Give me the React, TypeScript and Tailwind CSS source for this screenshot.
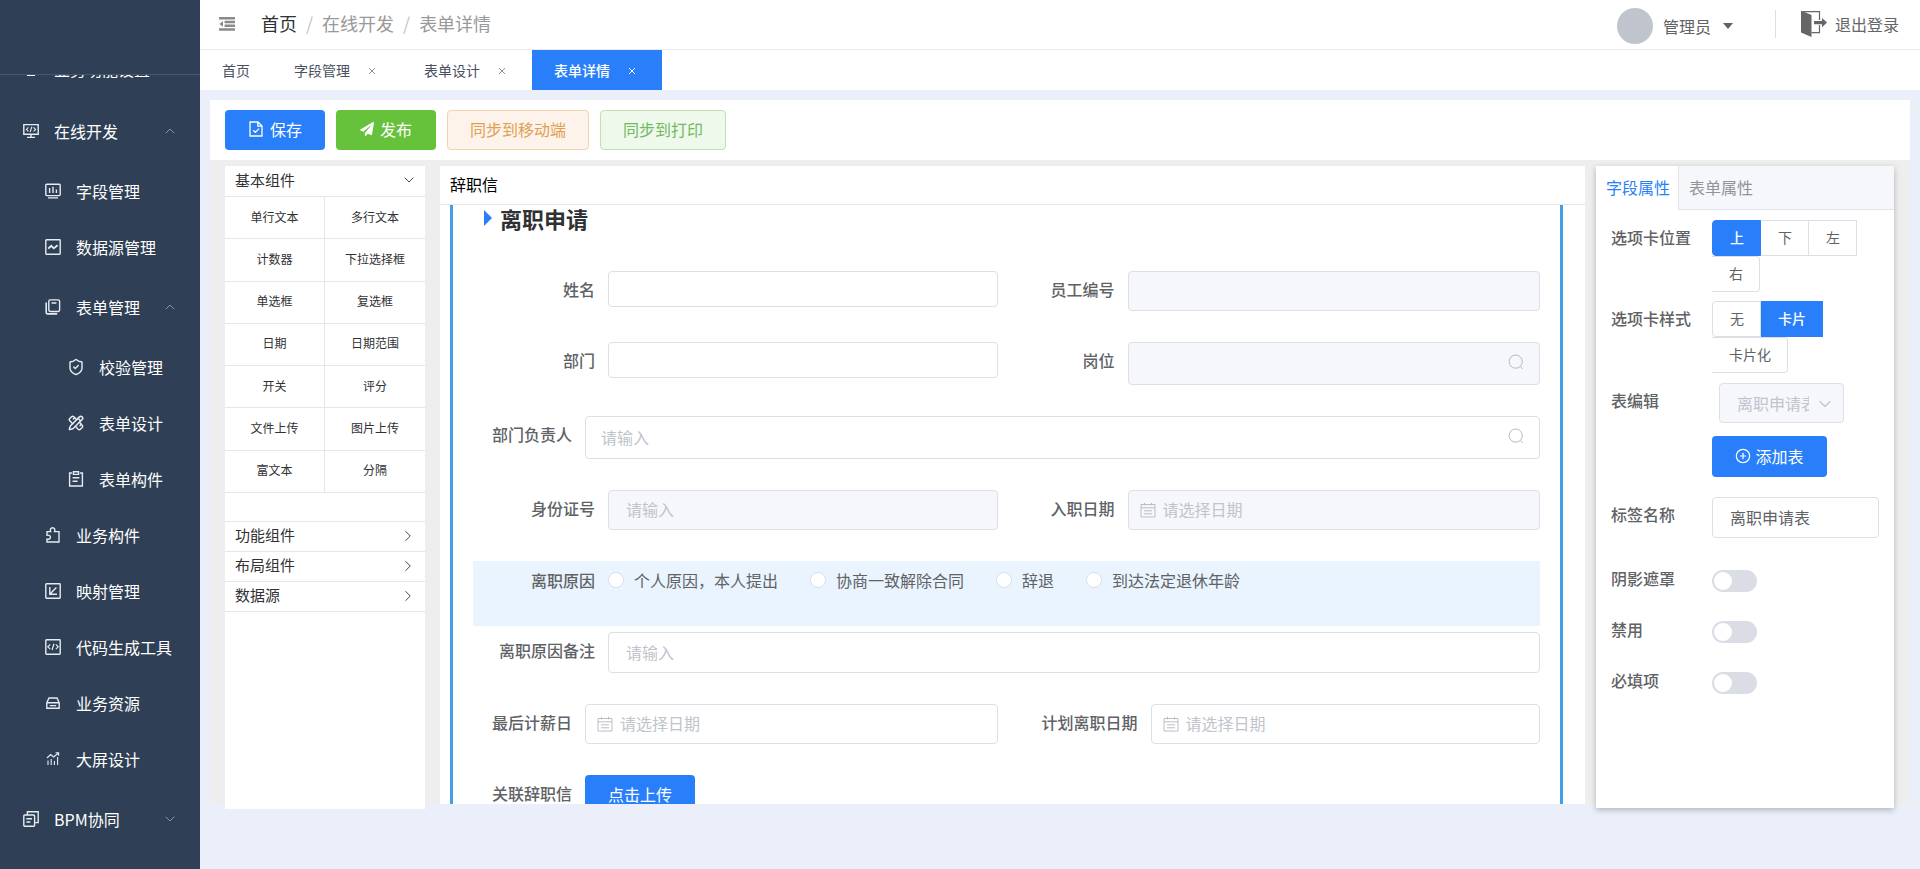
import { useState } from "react";
import type { ReactNode } from "react";
import clsx from "clsx";
import { ChevronDown, ChevronRight, ChevronUp, CirclePlus, PencilRuler, ShieldCheck } from "lucide-react";
import { FaPaperPlane } from "react-icons/fa";

function Svg({ children, className = "size-4" }: { children: ReactNode; className?: string }) {
  return (
    <svg
      viewBox="0 0 16 16"
      fill="none"
      stroke="currentColor"
      strokeWidth="1.4"
      aria-hidden="true"
      className={clsx("shrink-0", className)}
    >
      {children}
    </svg>
  );
}

const icons = {
  code: (
    <Svg>
      <path d="M.8 1.6h14.4v9.6H.8zM8 11.2v3M4 14.4h8" />
      <path d="M5.4 4.4 3.4 6.4l2 2M10.6 4.4l2 2-2 2M8.9 3.8 7.1 9" strokeWidth="1.1" />
    </Svg>
  ),
  field: (
    <Svg>
      <rect x=".8" y="1.2" width="14.4" height="11.4" rx="1" />
      <path d="M4.6 5v5M8 3.8V10M11.4 6.6V10M3 14.9h10" />
    </Svg>
  ),
  source: (
    <Svg>
      <rect x=".8" y=".8" width="14.4" height="14.4" rx=".6" />
      <path d="M3.2 9.6 6.2 6.8l2.6 2.6 3.8-3.2" strokeWidth="1.8" />
    </Svg>
  ),
  form: (
    <Svg>
      <rect x="3.8" y=".9" width="10.8" height="11.6" rx="1.4" />
      <path d="M1.2 3.4v9.8c0 1 .6 1.7 1.7 1.7h9.3M6.6 4h4.8" strokeWidth="1.6" />
    </Svg>
  ),
  shield: <ShieldCheck className="size-[18px] shrink-0" strokeWidth={1.9} />,
  design: <PencilRuler className="size-4 shrink-0" strokeWidth={2.2} />,
  clipboard: (
    <Svg>
      <path d="M4 2H1.6v13h12.8V2H12" />
      <path d="M5.4.8h5.2v2.6H5.4zM4.6 6.8h6.8M4.6 10.2h5" />
    </Svg>
  ),
  puzzle: (
    <Svg>
      <path d="M2 4.6h3.6c-.8-2 .2-3.8 2-3.8s2.800 1.800 2 3.800H14v10.400H2v-2.800c2.200.4 3.400-.6 3.400-2s-1.200-2.400-3.400-2z" />
    </Svg>
  ),
  mapping: (
    <Svg>
      <rect x=".8" y=".8" width="14.4" height="14.4" rx=".6" />
      <path d="M4.800 4v7.200H12M11.400 4.400 5 11" />
    </Svg>
  ),
  generator: (
    <Svg>
      <rect x=".8" y=".8" width="14.4" height="14.4" rx=".6" />
      <path d="M5.200 5.400 2.800 7.800l2.400 2.400M10.800 5.400l2.400 2.400-2.400 2.400M9 4.800 7 11" strokeWidth="1.200" />
    </Svg>
  ),
  resource: (
    <Svg>
      <path d="M1.800 7.800 4 3h8l2.200 4.800v5.400H1.800zM1.800 7.800h12.400M4.800 10.600h6.400" />
    </Svg>
  ),
  screen: (
    <Svg>
      <path d="M3 14V9.400M6.200 14V8M9.400 14v-4M12.600 14V6M2 7l3.600-3.400 3 2.400L13.400 2M10.600 1.800h3v3" strokeWidth="1.100" />
    </Svg>
  ),
  bpm: (
    <Svg>
      <rect x=".8" y="4" width="10.800" height="11.200" rx="1" />
      <path d="M4.400 4V.8h10.800v10.800h-3.600M3.400 7.800H9M3.400 11h4" />
    </Svg>
  ),
};

type MenuRow = {
  label: string;
  icon: ReactNode;
  level: 1 | 2 | 3;
  arrow?: "up" | "down";
};

const MENU: MenuRow[] = [
  { label: "在线开发", icon: icons.code, level: 1, arrow: "up" },
  { label: "字段管理", icon: icons.field, level: 2 },
  { label: "数据源管理", icon: icons.source, level: 2 },
  { label: "表单管理", icon: icons.form, level: 2, arrow: "up" },
  { label: "校验管理", icon: icons.shield, level: 3 },
  { label: "表单设计", icon: icons.design, level: 3 },
  { label: "表单构件", icon: icons.clipboard, level: 3 },
  { label: "业务构件", icon: icons.puzzle, level: 2 },
  { label: "映射管理", icon: icons.mapping, level: 2 },
  { label: "代码生成工具", icon: icons.generator, level: 2 },
  { label: "业务资源", icon: icons.resource, level: 2 },
  { label: "大屏设计", icon: icons.screen, level: 2 },
  { label: "BPM协同", icon: icons.bpm, level: 1, arrow: "down" },
];

const INDENT = { 1: "pl-[22px]", 2: "pl-11", 3: "pl-[67px]" };

function Sidebar() {
  return (
    <aside className="flex w-[200px] shrink-0 flex-col bg-[#2f3f55] text-white">
      <div className="h-[75px] shrink-0 border-b border-[#46566b]" />
      <nav className="min-h-0 flex-1 overflow-hidden">
        <a href="#" className="-mt-9 flex h-15 items-center gap-3.5 pl-[22px] text-base">
          <span className="flex w-[18px] justify-center">{icons.code}</span>
          业务功能设置
        </a>
        {MENU.map((m) => (
          <a
            key={m.label}
            href="#"
            className={clsx("flex items-center gap-3.5 pr-[22px] text-base", INDENT[m.level], m.arrow ? "h-16" : "h-14")}
          >
            <span className="flex w-[18px] justify-center text-[#e6ecf2]">{m.icon}</span>
            <span className="flex-1 whitespace-nowrap">{m.label}</span>
            {m.arrow === "up" && <ChevronUp className="size-4 text-[#8f9bab]" strokeWidth={1.4} />}
            {m.arrow === "down" && <ChevronDown className="size-4 text-[#8f9bab]" strokeWidth={1.4} />}
          </a>
        ))}
      </nav>
    </aside>
  );
}

function Header() {
  return (
    <header className="flex h-[50px] shrink-0 items-center border-b border-[#e8eaee] bg-white pr-[21px] pb-px pl-[19px]">
      <button aria-label="收起菜单" className="text-[#8a8a8a]">
        <svg viewBox="0 0 16 14" className="h-3.5 w-4" fill="currentColor">
          <path d="M0 0h16v2.600H0zM5.600 3.800H16v2.400H5.600zM5.600 7.600H16V10H5.600zM0 11.200h16v2.600H0zM4 4v5.800L.4 6.900z" />
        </svg>
      </button>
      <nav className="ml-[26px] flex items-center gap-[9px] pb-0.5 text-lg text-[#999]">
        <a href="#" className="text-[#303133]">
          首页
        </a>
        <span className="text-[#c0c4cc]">/</span>
        <a href="#">在线开发</a>
        <span className="text-[#c0c4cc]">/</span>
        <span>表单详情</span>
      </nav>
      <button className="ml-auto flex items-center pt-1 text-base text-[#606266]">
        <span className="mr-[10px] size-9 rounded-full bg-[#c0c4cc]" />
        管理员
        <svg viewBox="0 0 10 6" className="ml-3 h-1.5 w-2.5" fill="currentColor">
          <path d="M0 0h10L5 6z" />
        </svg>
      </button>
      <span className="mr-[25px] ml-[42px] h-7 w-px bg-[#dcdfe6]" />
      <button className="flex items-center gap-2 text-base text-[#666]">
        <svg viewBox="0 0 26 26" className="size-[26px]" fill="currentColor">
          <path d="M0 0h1l9.500 4v22L0 21.500z" />
          <path d="M2 .6h16.500V9M18.500 14v7.600h-8" fill="none" stroke="currentColor" strokeWidth="1.200" />
          <path d="M13 10h8V7l5 4.600-5 4.600v-3h-8z" />
        </svg>
        退出登录
      </button>
    </header>
  );
}

const TABS = ["首页", "字段管理", "表单设计", "表单详情"];

function TabBar() {
  const [active, setActive] = useState("表单详情");
  return (
    <div className="flex h-10 shrink-0 bg-white text-sm">
      {TABS.map((t, i) => (
        <button
          key={t}
          onClick={() => setActive(t)}
          className={clsx(
            "flex items-center gap-[14px] px-[22px] pb-px",
            t === active ? "bg-[#297ff9] font-medium text-white" : "text-[#495060]",
          )}
        >
          {t}
          {i > 0 && (
            <span className={clsx("flex w-4 justify-center pt-0.5", t !== active && "text-[#8c919b]")}>
              <svg viewBox="0 0 8 8" className="size-2" fill="none" stroke="currentColor">
                <path d="m1 1 6 6M7 1 1 7" />
              </svg>
            </span>
          )}
        </button>
      ))}
    </div>
  );
}

function Toolbar() {
  return (
    <div className="flex h-[60px] shrink-0 items-center gap-[11px] bg-white px-[15px] text-base">
      <button className="flex h-10 w-[100px] items-center justify-center gap-1.5 rounded bg-[#297ff9] pb-0.5 text-white">
        <Svg>
          <path d="M2 1h8l4 4v10H2zM9.800 1v4.200H14M5.200 9.200l2.200 2.200 3.600-3.800" strokeWidth="1.300" />
        </Svg>
        保存
      </button>
      <button className="flex h-10 w-[100px] items-center justify-center gap-1.5 rounded bg-[#66c23a] pb-0.5 text-white">
        <FaPaperPlane className="size-3.5" />
        发布
      </button>
      <button className="h-10 rounded border border-[#f2d3b0] bg-[#fdf3ea] px-[22px] pb-0.5 text-[#dfa054]">
        同步到移动端
      </button>
      <button className="h-10 rounded border border-[#bfe2b0] bg-[#eff9eb] px-[22px] pb-0.5 text-[#71b765]">
        同步到打印
      </button>
    </div>
  );
}

const BASIC = [
  "单行文本", "多行文本",
  "计数器", "下拉选择框",
  "单选框", "复选框",
  "日期", "日期范围",
  "开关", "评分",
  "文件上传", "图片上传",
  "富文本", "分隔",
];

function ComponentPanel() {
  return (
    <section className="-mb-[5px] w-[200px] shrink-0 bg-white text-[#303133]">
      <button className="flex h-[31px] w-full items-center justify-between border-b border-[#e6e6e6] pr-2 pb-0.5 pl-2.5 text-[15px]">
        基本组件
        <ChevronDown className="size-4" strokeWidth={1.3} />
      </button>
      <div className="grid h-[296px] grid-cols-2 grid-rows-7 text-xs">
        {BASIC.map((b) => (
          <button key={b} className="border-b border-[#e6e6e6] pb-0.5 odd:border-r">
            {b}
          </button>
        ))}
      </div>
      <div className="mt-7 border-t border-[#e6e6e6]">
        {["功能组件", "布局组件", "数据源"].map((g) => (
          <button
            key={g}
            className="flex h-[30px] w-full items-center justify-between border-b border-[#e6e6e6] pr-2 pb-0.5 pl-2.5 text-[15px]"
          >
            {g}
            <ChevronRight className="size-[18px]" strokeWidth={1.2} />
          </button>
        ))}
      </div>
    </section>
  );
}

function Field({
  id,
  label,
  wide,
  children,
}: {
  id: string;
  label: string;
  wide?: boolean;
  children: ReactNode;
}) {
  return (
    <div className="flex items-start">
      <label
        htmlFor={id}
        className={clsx("shrink-0 pr-[13px] text-right leading-9 font-medium whitespace-nowrap", wide ? "w-[135px]" : "w-[112px]")}
      >
        {label}
      </label>
      {children}
    </div>
  );
}

const box = "w-full min-w-0 rounded border border-[#dcdfe6] pb-0.5 placeholder:text-[#c0c4cc] disabled:bg-[#f5f7fb]";

function SearchInput({ id, placeholder, disabled }: { id: string; placeholder?: string; disabled?: boolean }) {
  return (
    <div className="relative flex-1">
      <input id={id} placeholder={placeholder} disabled={disabled} className={clsx(box, "block h-[43px] pr-10 pl-[15px]")} />
      <Svg className="absolute top-3 right-4 size-4 text-[#b4bac4]">
        <circle cx="7.700" cy="7.600" r="6.600" strokeWidth="1" />
        <path d="m12.200 12.400 2.600 2.600" strokeWidth="1" />
      </Svg>
    </div>
  );
}

function DateInput({ id, disabled }: { id: string; disabled?: boolean }) {
  return (
    <div className="relative flex-1">
      <input id={id} placeholder="请选择日期" disabled={disabled} className={clsx(box, "block h-10 pr-4 pl-[34px]")} />
      <Svg className="absolute top-3 left-3 size-4 text-[#b8bdc7]">
        <path d="M1 2.500h14v12.500H1zM1 5.800h14M4.500.8v2.600M11.500.8v2.600M4 8.800h8M4 11.800h8" strokeWidth="1" />
      </Svg>
    </div>
  );
}

const REASONS = ["个人原因，本人提出", "协商一致解除合同", "辞退", "到达法定退休年龄"];

function FormCanvas() {
  return (
    <section className="ml-[15px] flex min-w-0 flex-1 flex-col bg-white text-base text-[#606266]">
      <h2 className="h-[39px] shrink-0 border-b border-[#e6e6e6] px-[10px] leading-9 text-black">辞职信</h2>
      <div className="mr-[22px] ml-[10px] min-h-0 flex-1 overflow-hidden border-x-[3px] border-[#429ee8] px-5">
        <h1 className="flex h-[30px] items-center gap-2 pb-1 pl-[11px] text-[22px] font-bold text-[#303133]">
          <svg viewBox="0 0 8 16" className="h-4 w-2" fill="#297ff9">
            <path d="M0 0l8 8-8 8z" />
          </svg>
          离职申请
        </h1>
        <form className="mt-9">
          <div className="mb-[31px] grid grid-cols-2 gap-x-[18px]">
            <Field id="name" label="姓名" wide>
              <input id="name" className={clsx(box, "h-9 px-[17px]")} />
            </Field>
            <Field id="staff-no" label="员工编号">
              <input id="staff-no" disabled className={clsx(box, "h-10 px-[17px]")} />
            </Field>
          </div>
          <div className="mb-[31px] grid grid-cols-2 gap-x-[18px]">
            <Field id="dept" label="部门" wide>
              <input id="dept" className={clsx(box, "h-9 px-[17px]")} />
            </Field>
            <Field id="post" label="岗位">
              <SearchInput id="post" disabled />
            </Field>
          </div>
          <div className="mb-[31px]">
            <Field id="leader" label="部门负责人">
              <SearchInput id="leader" placeholder="请输入" />
            </Field>
          </div>
          <div className="mb-[31px] grid grid-cols-2 gap-x-[18px]">
            <Field id="id-card" label="身份证号" wide>
              <input id="id-card" placeholder="请输入" disabled className={clsx(box, "h-10 px-[17px]")} />
            </Field>
            <Field id="entry-date" label="入职日期">
              <DateInput id="entry-date" disabled />
            </Field>
          </div>
          <fieldset className="mb-1.5 flex h-[65px] items-start bg-[#eaf4fe]">
            <legend className="float-left w-[135px] pr-[13px] text-right leading-[38px] font-medium">离职原因</legend>
            <div className="flex flex-wrap gap-x-8">
              {REASONS.map((r) => (
                <label key={r} className="flex items-center gap-[10px] leading-[38px] whitespace-nowrap">
                  <input
                    type="radio"
                    name="reason"
                    className="size-4 appearance-none rounded-full border border-[#dcdfe6] bg-white checked:border-[5px] checked:border-[#297ff9]"
                  />
                  {r}
                </label>
              ))}
            </div>
          </fieldset>
          <div className="mb-[31px]">
            <Field id="remark" label="离职原因备注" wide>
              <input id="remark" placeholder="请输入" className={clsx(box, "h-[41px] px-[17px]")} />
            </Field>
          </div>
          <div className="mb-[31px] grid grid-cols-2 gap-x-[18px]">
            <Field id="pay-date" label="最后计薪日">
              <DateInput id="pay-date" />
            </Field>
            <Field id="plan-date" label="计划离职日期" wide>
              <DateInput id="plan-date" />
            </Field>
          </div>
          <Field id="letter" label="关联辞职信">
            <button id="letter" type="button" className="h-10 w-[110px] rounded bg-[#297ff9] pb-0.5 text-white">
              点击上传
            </button>
          </Field>
        </form>
      </div>
    </section>
  );
}

function PropRow({
  label,
  htmlFor,
  className,
  children,
}: {
  label: string;
  htmlFor?: string;
  className?: string;
  children: ReactNode;
}) {
  return (
    <div className={clsx("flex items-start", className)}>
      <label htmlFor={htmlFor} className="w-[101px] shrink-0 leading-[34px] font-medium">
        {label}
      </label>
      <div className="min-w-0 flex-1">{children}</div>
    </div>
  );
}

function RadioButtons({ name, options, initial }: { name: string; options: string[]; initial: string }) {
  const [value, setValue] = useState(initial);
  return (
    <div role="radiogroup" aria-label={name} className="flex flex-wrap text-sm">
      {options.map((o) => (
        <label
          key={o}
          className={clsx(
            "h-9 cursor-pointer border border-l-0 pr-4 pl-[17px] leading-8 first:rounded-l first:border-l last:rounded-r",
            o === value ? "border-[#297ff9] bg-[#297ff9] font-medium text-white" : "border-[#dcdfe6] bg-white",
          )}
        >
          <input type="radio" name={name} checked={o === value} onChange={() => setValue(o)} className="sr-only" />
          {o}
        </label>
      ))}
    </div>
  );
}

function Switch({ id }: { id: string }) {
  return (
    <div className="flex h-10 items-center">
      <input
        id={id}
        type="checkbox"
        role="switch"
        className="h-[22px] w-[45px] appearance-none rounded-full bg-[#dadde5] p-0.5 before:block before:size-[18px] before:rounded-full before:bg-white checked:bg-[#297ff9] checked:before:ml-auto"
      />
    </div>
  );
}

function PropertyPanel() {
  return (
    <section className="z-10 -mb-1 ml-[11px] w-[298px] shrink-0 bg-white text-base text-[#606266] shadow-[0_2px_6px_rgba(0,0,0,0.25)]">
      <div className="flex h-11 border-b border-[#dfe3ea] bg-[#f5f7fa]">
        <button className="-mb-px border-r border-[#dfe3ea] bg-white pr-2 pb-0.5 pl-[10px] text-[#297ff9]">
          字段属性
        </button>
        <button className="px-[10px] pb-px text-[#909399]">表单属性</button>
      </div>
      <div className="px-[15px] pt-[10px]">
        <PropRow label="选项卡位置" className="mb-[9px]">
          <RadioButtons name="选项卡位置" options={["上", "下", "左", "右"]} initial="上" />
        </PropRow>
        <PropRow label="选项卡样式" className="mb-[10px]">
          <RadioButtons name="选项卡样式" options={["无", "卡片", "卡片化"]} initial="卡片" />
        </PropRow>
        <PropRow label="表编辑" htmlFor="table-edit" className="mb-5">
          <div className="relative ml-[7px] w-[125px]">
            <select
              id="table-edit"
              disabled
              className="block h-10 w-full appearance-none rounded border border-[#dcdfe6] bg-[#f5f7fb] pr-[34px] pl-[17px] text-[#c0c4cc] opacity-100"
            >
              <option>离职申请表</option>
            </select>
            <ChevronDown className="absolute top-[11px] right-[9px] size-5 text-[#c0c4cc]" strokeWidth={1.4} />
          </div>
          <button className="mt-[13px] flex h-[41px] w-[115px] items-center justify-center gap-1 rounded bg-[#297ff9] pb-0.5 text-white">
            <CirclePlus className="size-4" strokeWidth={1.8} />
            添加表
          </button>
        </PropRow>
        <PropRow label="标签名称" htmlFor="tab-name" className="mb-[23px]">
          <input id="tab-name" defaultValue="离职申请表" className={clsx(box, "block h-[41px] px-[17px]")} />
        </PropRow>
        <PropRow label="阴影遮罩" htmlFor="mask" className="mb-[11px]">
          <Switch id="mask" />
        </PropRow>
        <PropRow label="禁用" htmlFor="disabled" className="mb-[11px]">
          <Switch id="disabled" />
        </PropRow>
        <PropRow label="必填项" htmlFor="required">
          <Switch id="required" />
        </PropRow>
      </div>
    </section>
  );
}

export default function App() {
  return (
    <div className="flex h-screen overflow-hidden bg-[#eaeffa] font-['Noto_Sans_CJK_SC',sans-serif]">
      <Sidebar />
      <div className="flex min-w-0 flex-1 flex-col">
        <Header />
        <TabBar />
        <main className="flex min-h-0 flex-1 flex-col px-[10px] pt-[10px] pb-[65px]">
          <Toolbar />
          <div className="flex min-h-0 flex-1 bg-[#eeeeee] pt-1.5 pr-4 pl-[15px]">
            <ComponentPanel />
            <FormCanvas />
            <PropertyPanel />
          </div>
        </main>
      </div>
    </div>
  );
}
